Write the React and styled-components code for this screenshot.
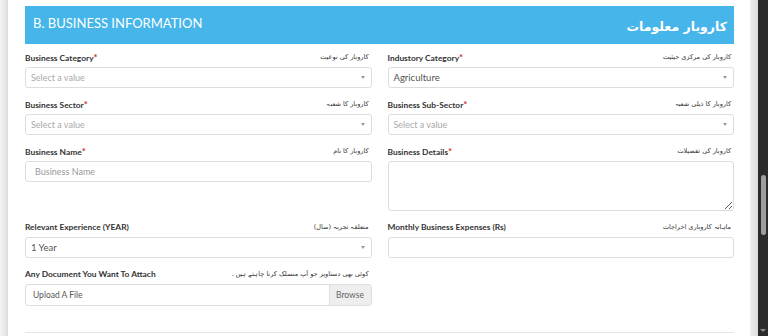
import React from 'react'
import styled, { createGlobalStyle } from 'styled-components'

const GlobalStyle = createGlobalStyle`
  html, body { margin: 0; padding: 0; background: #fff; }
  body { font-family: 'Lato', 'Liberation Sans', sans-serif; }
`;

const Page = styled.div`
  display: flex;
  width: 768px;
  height: 336px;
  overflow: hidden;
  background: #fff;
`;

const LeftShade = styled.div`
  width: 8px;
  flex: none;
  background: linear-gradient(to right, #f4f4f4, #e2e2e2 85%, #d6d6d6);
`;

const RightShade = styled.div`
  width: 8px;
  flex: none;
  background: linear-gradient(to right, #f0f0f0, #dcdcdc);
`;

const Scrollbar = styled.div`
  width: 10px;
  flex: none;
  background: #2b2b2b;
  display: flex;
  flex-direction: column;
  align-items: center;
  padding-top: 175px;
  box-sizing: border-box;
`;

const Thumb = styled.div`
  width: 5px;
  height: 60px;
  border-radius: 3px;
  background: #9e9e9e;
`;

const ScrollArrow = styled.div`
  margin-top: auto;
  margin-bottom: 4px;
  width: 0;
  height: 0;
  border-left: 3px solid transparent;
  border-right: 3px solid transparent;
  border-top: 3px solid #8a8a8a;
`;

const Main = styled.div`
  flex: 1;
  padding: 6px 16px 0 17px;
  box-sizing: border-box;
`;

const Header = styled.div`
  height: 38px;
  background: #45b5ea;
  display: flex;
  justify-content: space-between;
  align-items: flex-start;
  padding: 10px 7px 0 8px;
  box-sizing: border-box;
  color: #fff;
`;

const HeaderTitle = styled.div`
  font-size: 13px;
  line-height: 14px;
`;

const HeaderUrdu = styled.div`
  font-family: 'DejaVu Sans', sans-serif;
  font-weight: bold;
  font-size: 12.5px;
  line-height: 18px;
  direction: rtl;
  margin-top: 2px;
`;

const Grid = styled.div`
  display: grid;
  grid-template-columns: 1fr 1fr;
  column-gap: 16px;
  align-items: start;
  margin-top: 7px;
`;

const Field = styled.div`
  display: flex;
  flex-direction: column;
  margin-bottom: 10px;
`;

const LabelRow = styled.div`
  height: 12px;
  display: flex;
  justify-content: space-between;
  align-items: center;
  margin-bottom: 4px;
`;

const Label = styled.span`
  font-size: 8.4px;
  font-weight: 700;
  color: #333;
`;

const Star = styled.span`
  color: #c9302c;
  font-size: 9.5px;
`;

const Urdu = styled.span`
  font-family: 'DejaVu Sans', sans-serif;
  font-size: 6.5px;
  color: #333;
  direction: rtl;
  margin-right: 3px;
`;

const Select = styled.div`
  height: 21px;
  border: 1px solid #ddd;
  border-radius: 3px;
  box-sizing: border-box;
  display: flex;
  align-items: center;
  justify-content: space-between;
  padding: 0 6px 0 5px;
  font-size: ${p => p.$placeholder ? '9px' : '9.5px'};
  color: ${p => p.$placeholder ? '#a9a9a9' : '#555'};
`;

const Caret = styled.span`
  width: 0;
  height: 0;
  border-left: 2.5px solid transparent;
  border-right: 2.5px solid transparent;
  border-top: 3px solid #999;
`;

const Input = styled.div`
  height: 21px;
  border: 1px solid #ddd;
  border-radius: 3px;
  box-sizing: border-box;
  display: flex;
  align-items: center;
  padding: 0 9px;
  font-size: 9px;
  color: #999;
`;

const TextArea = styled.textarea`
  height: 50px;
  border: 1px solid #ddd;
  border-radius: 3px;
  box-sizing: border-box;
  font-family: inherit;
  resize: vertical;
  outline: none;
  margin: 0;
`;

const FileBox = styled.div`
  height: 22px;
  border: 1px solid #ddd;
  border-radius: 3px;
  box-sizing: border-box;
  display: flex;
  overflow: hidden;
`;

const FileName = styled.div`
  flex: 1;
  display: flex;
  align-items: center;
  padding-left: 7px;
  font-size: 8.5px;
  color: #555;
`;

const Browse = styled.div`
  width: 41px;
  background: #eee;
  border-left: 1px solid #ddd;
  display: flex;
  align-items: center;
  justify-content: center;
  font-size: 8.5px;
  color: #666;
`;

const Divider = styled.div`
  border-top: 1px solid #e6e6e6;
  margin-top: 16px;
`;

const FieldLabel = ({ text, urdu, required }) => (
  <LabelRow>
    <Label>{text}{required && <Star>*</Star>}</Label>
    <Urdu>{urdu}</Urdu>
  </LabelRow>
);

const SelectBox = ({ value, placeholder }) => (
  <Select $placeholder={placeholder}>
    <span>{value}</span>
    <Caret />
  </Select>
);

const App = () => {
  return (
    <>
      <GlobalStyle />
      <Page>
        <LeftShade />
        <Main>
          <Header>
            <HeaderTitle>B. BUSINESS INFORMATION</HeaderTitle>
            <HeaderUrdu>کاروبار معلومات</HeaderUrdu>
          </Header>
          <Grid>
            <Field>
              <FieldLabel text="Business Category" urdu="کاروبار کی نوعیت" required />
              <SelectBox value="Select a value" placeholder />
            </Field>
            <Field>
              <FieldLabel text="Industory Category" urdu="کاروبار کی مرکزی حیثیت" required />
              <SelectBox value="Agriculture" />
            </Field>
            <Field>
              <FieldLabel text="Business Sector" urdu="کاروبار کا شعبہ" required />
              <SelectBox value="Select a value" placeholder />
            </Field>
            <Field>
              <FieldLabel text="Business Sub-Sector" urdu="کاروبار کا ذیلی شعبہ" required />
              <SelectBox value="Select a value" placeholder />
            </Field>
            <Field>
              <FieldLabel text="Business Name" urdu="کاروبار کا نام" required />
              <Input>Business Name</Input>
            </Field>
            <Field>
              <FieldLabel text="Business Details" urdu="کاروبار کی تفصیلات" required />
              <TextArea />
            </Field>
            <Field>
              <FieldLabel text="Relevant Experience (YEAR)" urdu="متعلقہ تجربہ (سال)" />
              <SelectBox value="1 Year" />
            </Field>
            <Field>
              <FieldLabel text="Monthly Business Expenses (Rs)" urdu="ماہانہ کاروباری اخراجات" />
              <Input />
            </Field>
            <Field>
              <FieldLabel text="Any Document You Want To Attach" urdu="کوئی بھی دستاویز جو آپ منسلک کرنا چاہتے ہیں۔" />
              <FileBox>
                <FileName>Upload A File</FileName>
                <Browse>Browse</Browse>
              </FileBox>
            </Field>
          </Grid>
          <Divider />
        </Main>
        <RightShade />
        <Scrollbar>
          <Thumb />
          <ScrollArrow />
        </Scrollbar>
      </Page>
    </>
  )
}

export default App
